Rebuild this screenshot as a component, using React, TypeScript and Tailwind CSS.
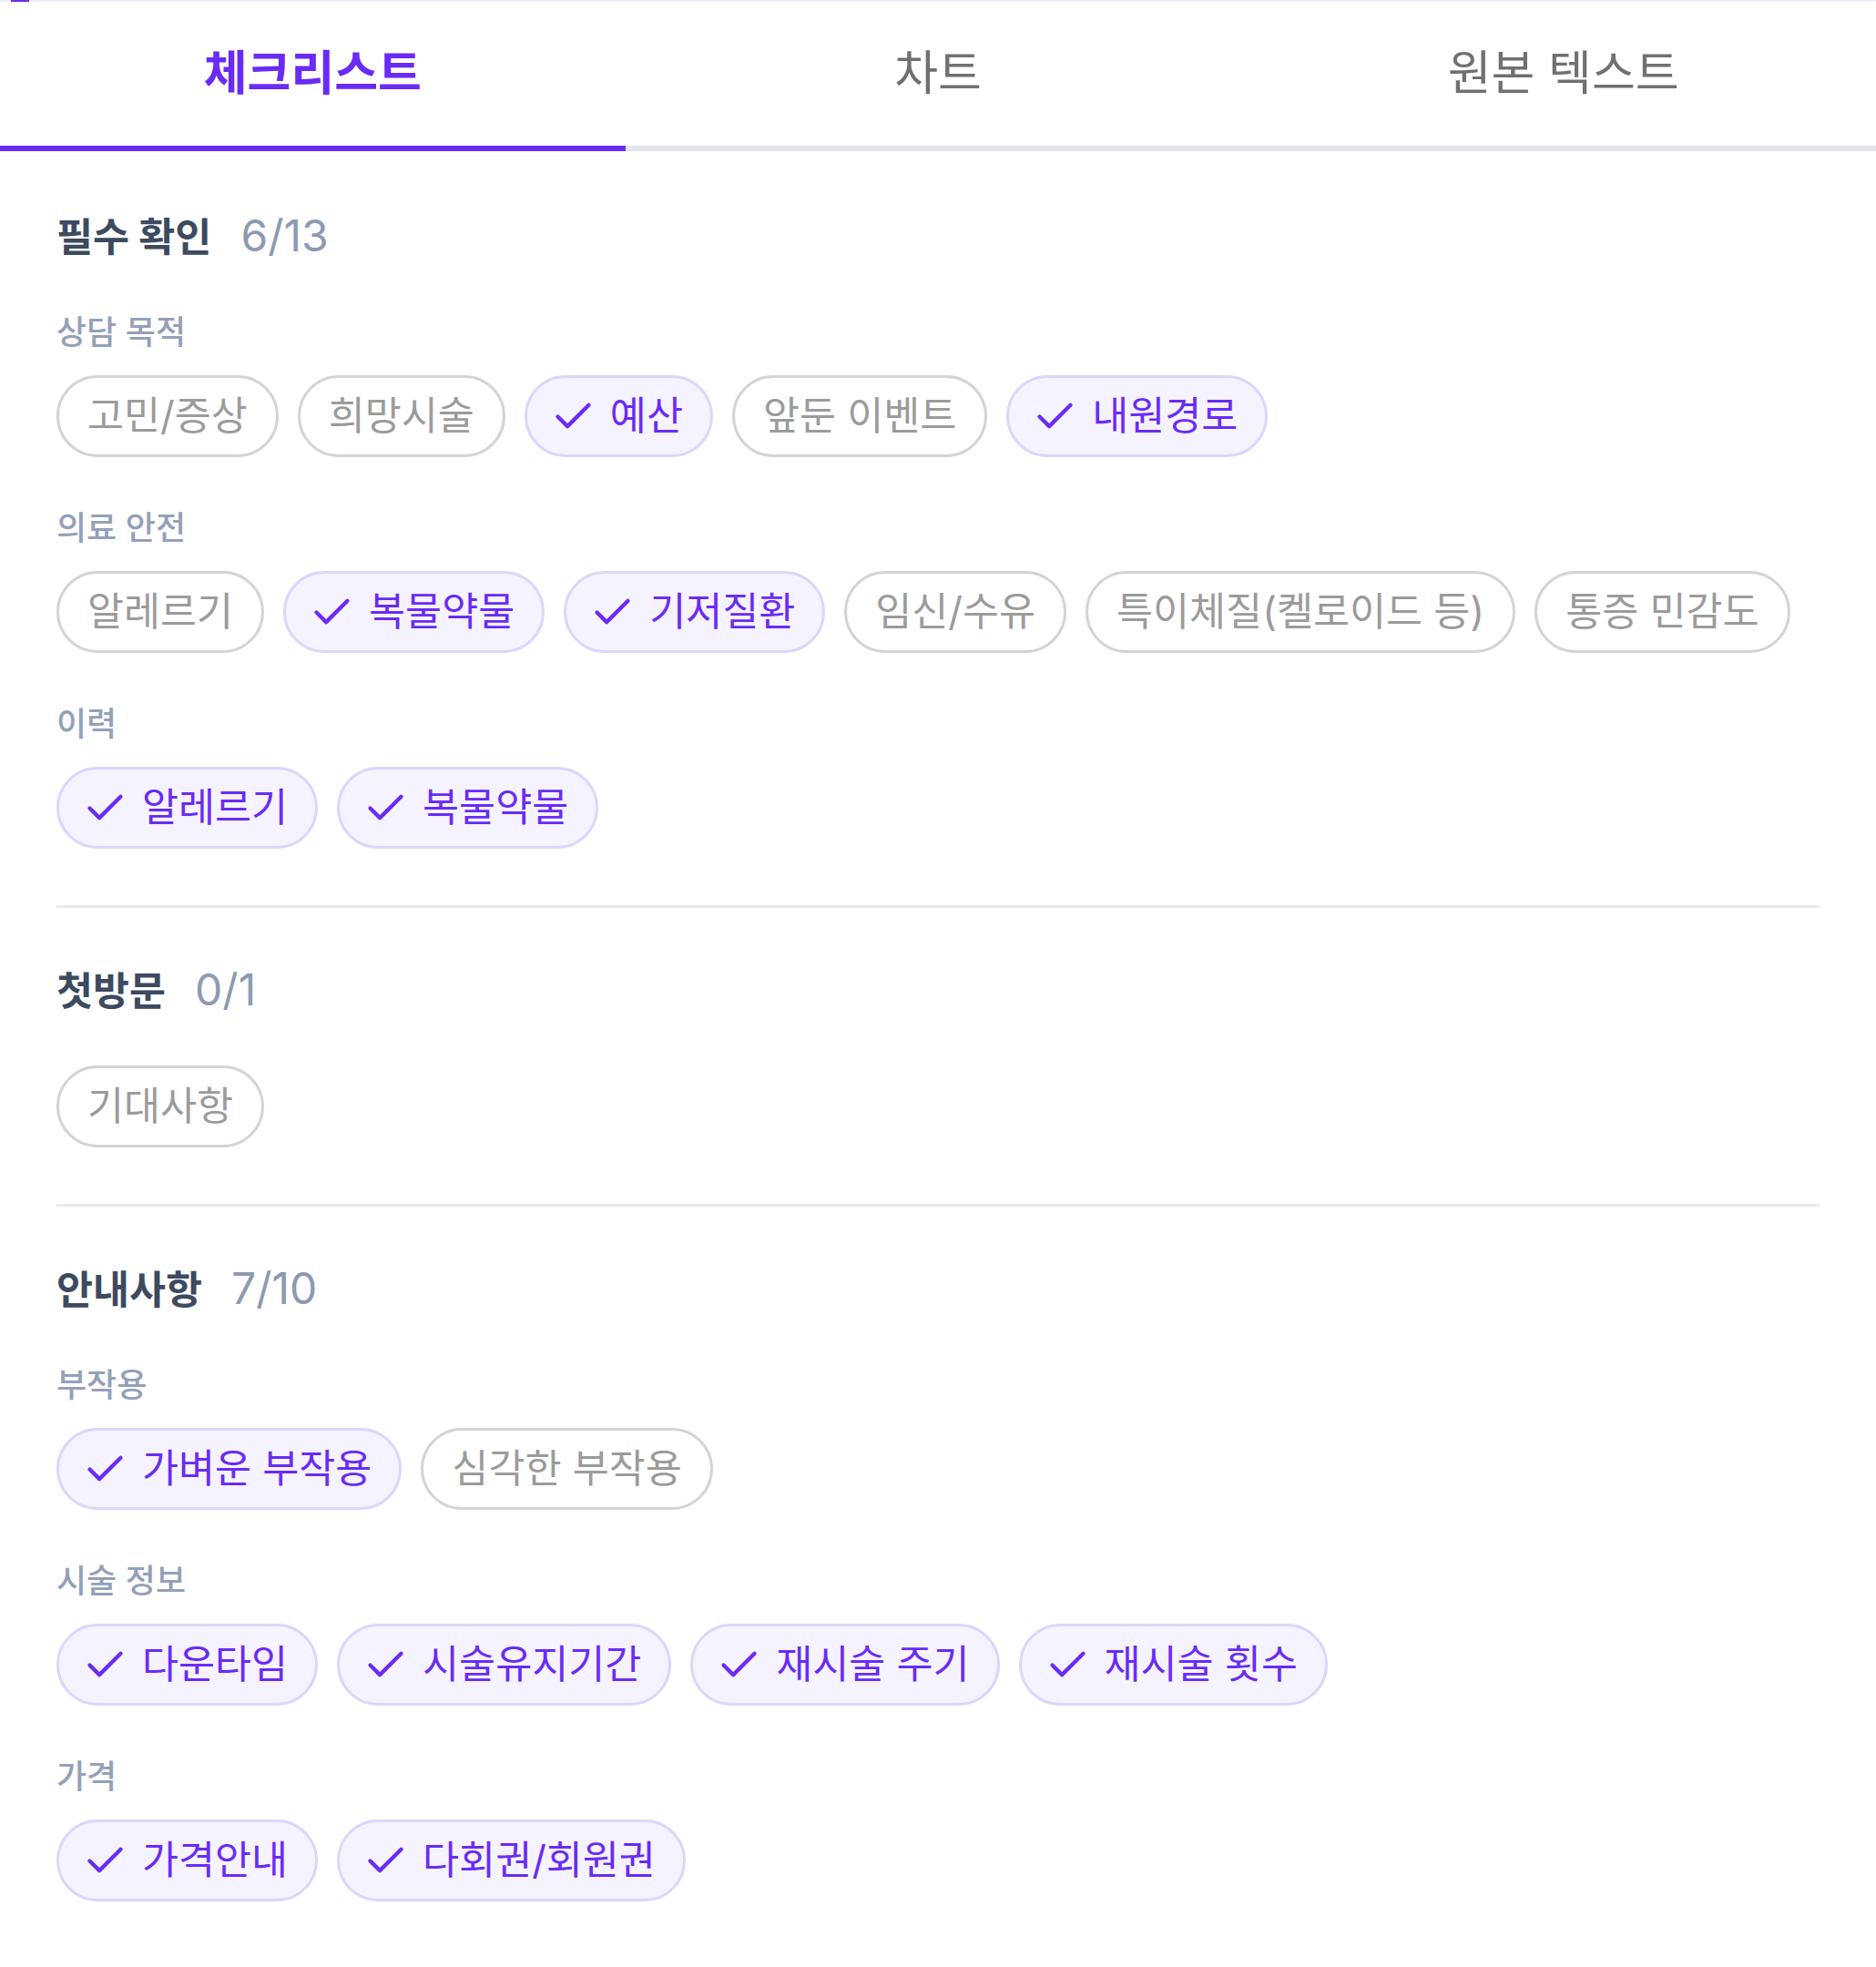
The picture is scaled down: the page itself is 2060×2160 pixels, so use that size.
import React, { useState } from "react";
import { Check } from "lucide-react";

interface ChipItem {
  readonly label: string;
  readonly done: boolean;
}

interface ChecklistGroup {
  readonly label?: string;
  readonly items: ChipItem[];
}

interface ChecklistSection {
  readonly title: string;
  readonly count: string;
  readonly groups: ChecklistGroup[];
}

const item = (label: string, done = false): ChipItem => ({ label, done });

const SECTIONS: ChecklistSection[] = [
  {
    title: "필수 확인",
    count: "6/13",
    groups: [
      {
        label: "상담 목적",
        items: [
          item("고민/증상"),
          item("희망시술"),
          item("예산", true),
          item("앞둔 이벤트"),
          item("내원경로", true),
        ],
      },
      {
        label: "의료 안전",
        items: [
          item("알레르기"),
          item("복물약물", true),
          item("기저질환", true),
          item("임신/수유"),
          item("특이체질(켈로이드 등)"),
          item("통증 민감도"),
        ],
      },
      {
        label: "이력",
        items: [item("알레르기", true), item("복물약물", true)],
      },
    ],
  },
  {
    title: "첫방문",
    count: "0/1",
    groups: [{ items: [item("기대사항")] }],
  },
  {
    title: "안내사항",
    count: "7/10",
    groups: [
      {
        label: "부작용",
        items: [item("가벼운 부작용", true), item("심각한 부작용")],
      },
      {
        label: "시술 정보",
        items: [
          item("다운타임", true),
          item("시술유지기간", true),
          item("재시술 주기", true),
          item("재시술 횟수", true),
        ],
      },
      {
        label: "가격",
        items: [item("가격안내", true), item("다회권/회원권", true)],
      },
    ],
  },
];

const TABS = ["체크리스트", "차트", "원본 텍스트"];

const Chip = ({ label, done }: ChipItem) => {
  if (done) {
    return (
      <span className="inline-flex h-[90px] items-center gap-[15px] rounded-full border-[3px] border-[#ddd5fd] bg-[#f5f3ff] pl-[25px] pr-[30px] text-[43.5px] text-[#6a2bf5]">
        <Check size={51} strokeWidth={2} className="shrink-0" />
        <span className="whitespace-nowrap">{label}</span>
      </span>
    );
  }
  return (
    <span className="inline-flex h-[90px] items-center rounded-full border-[3px] border-[#d4d4d4] bg-white px-[31px] text-[43.5px] text-[#9b9b9b]">
      <span className="whitespace-nowrap">{label}</span>
    </span>
  );
};

const Section = ({
  section,
  first,
  last,
}: {
  section: ChecklistSection;
  first: boolean;
  last: boolean;
}) => (
  <section
    className={`${first ? "pt-[65px]" : "pt-[62px]"} pb-[62px] ${
      last ? "" : "border-b-[3px] border-[#e8e8f0]"
    }`}
  >
    <div className="flex h-[56px] items-baseline gap-[32px] leading-[56px]">
      <h2 className="text-[43.5px] font-bold text-[#3d4a5f]">{section.title}</h2>
      <span className="text-[48px] text-[#8d9ab3]">{section.count}</span>
    </div>
    {section.groups.map((group, i) => (
      <div key={i} className="mt-[55px]">
        {group.label && (
          <div className="mb-[24px] text-[36px] font-medium leading-[46px] text-[#94a0b8]">
            {group.label}
          </div>
        )}
        <div className="flex flex-wrap gap-[21px]">
          {group.items.map((chip, j) => (
            <Chip key={j} label={chip.label} done={chip.done} />
          ))}
        </div>
      </div>
    ))}
  </section>
);

export default function App() {
  const [activeTab, setActiveTab] = useState(0);

  return (
    <div className="min-h-[2160px] w-full bg-white font-['Inter','Noto_Sans_CJK_KR',sans-serif]">
      <div className="h-[2px] w-full bg-[#f1f0fa]">
        <div className="ml-[12px] h-full w-[20px] bg-[#6a2bf5]" />
      </div>
      <div className="flex">
        {TABS.map((tab, i) => (
          <button
            key={tab}
            type="button"
            onClick={() => setActiveTab(i)}
            className={`flex h-[164px] flex-1 items-center justify-center border-b-[6px] text-[52px] ${
              activeTab === i
                ? "border-[#6a2bf5] font-semibold text-[#6a2bf5]"
                : "border-[#e4e4ee] text-[#707070]"
            }`}
          >
            {tab}
          </button>
        ))}
      </div>
      <div className="px-[62px]">
        {SECTIONS.map((section, i) => (
          <Section
            key={section.title}
            section={section}
            first={i === 0}
            last={i === SECTIONS.length - 1}
          />
        ))}
      </div>
    </div>
  );
}
